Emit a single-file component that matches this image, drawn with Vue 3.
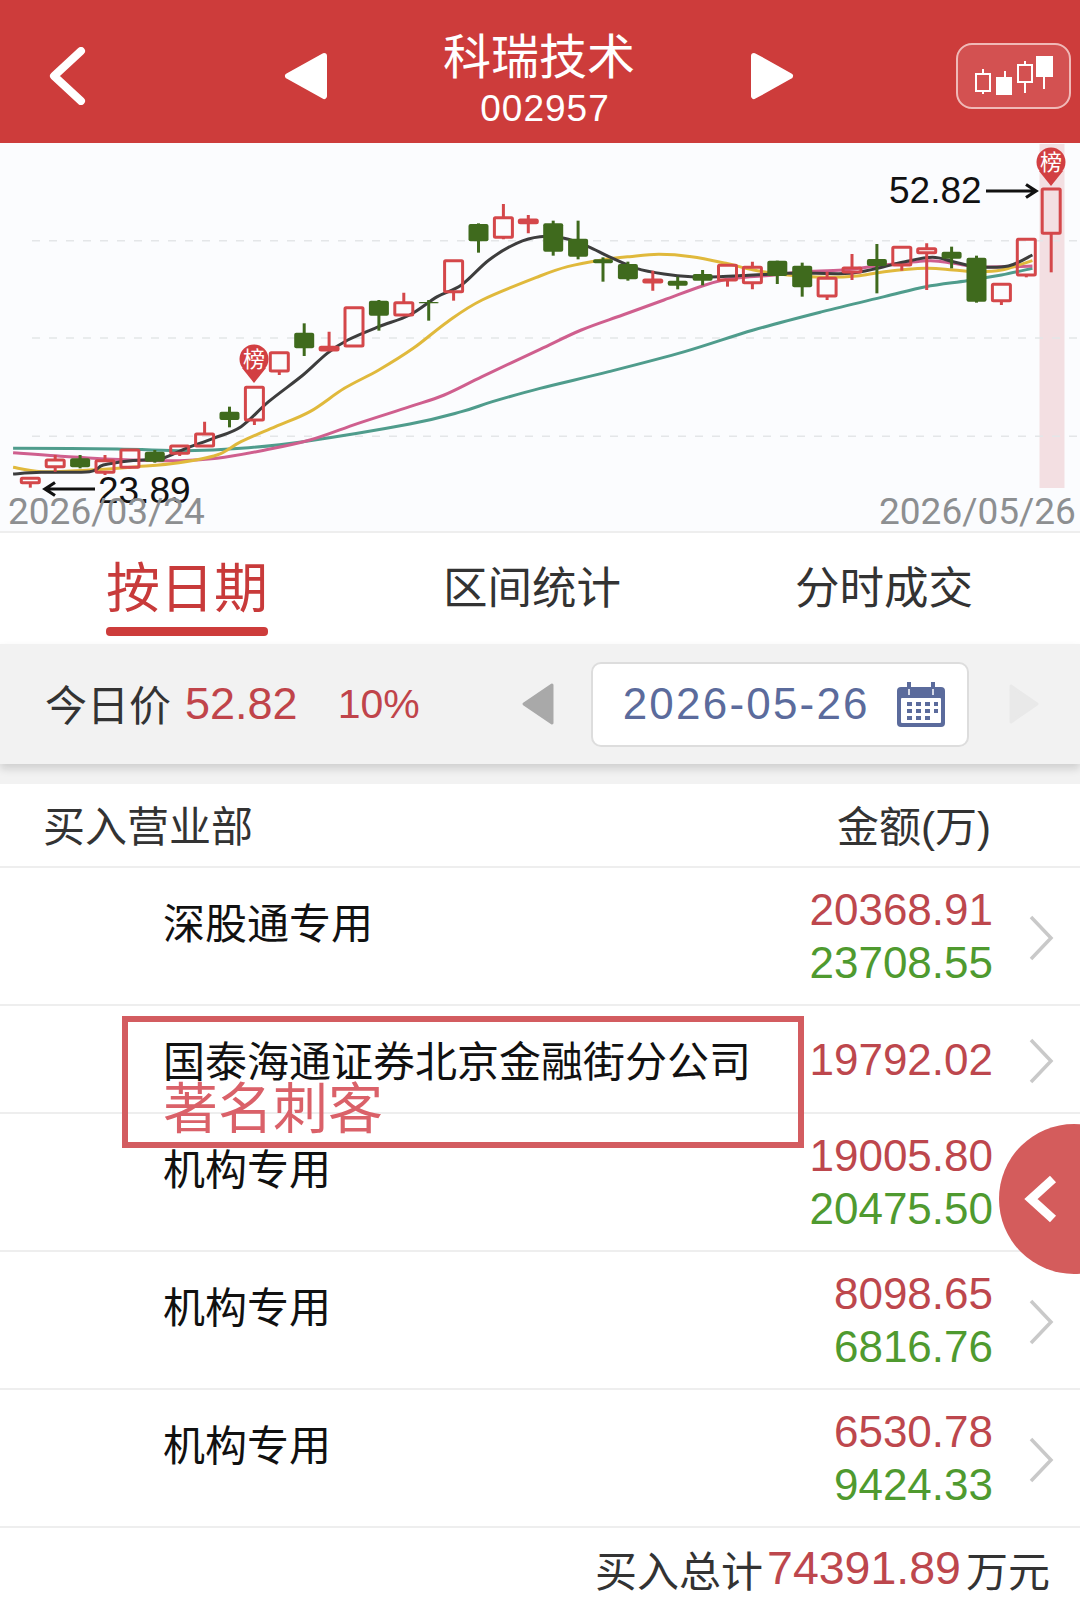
<script setup>
// chart numbers were read off the zoomed crops, z = crop pixel
const px = z => z / 2.904
const py = z => z / 3 - 3
const pr = z => z / 2.904 + 540

// [top of wick, top of body, bottom of body, bottom of wick, up?]
const raw = [
  [1015, 1015, 1028, 1043, 1], [945, 960, 980, 995, 1], [945, 955, 982, 985, 0], [945, 962, 997, 1005, 1],
  [930, 930, 982, 985, 1], [930, 935, 965, 968, 0], [918, 918, 940, 948, 1], [845, 882, 918, 920, 1],
  [800, 815, 840, 862, 0], [742, 742, 840, 855, 1], [638, 638, 693, 705, 1], [550, 578, 625, 648, 0],
  [575, 622, 630, 632, 1], [503, 503, 618, 620, 1], [480, 482, 527, 572, 0], [458, 488, 525, 528, 1],
  [480, 486, 490, 542, 0], [362, 362, 455, 482, 1], [250, 252, 304, 338, 0], [192, 233, 292, 298, 1],
  [225, 240, 248, 280, 1], [242, 250, 335, 347, 0], [242, 296, 350, 358, 0], [352, 358, 370, 425, 0],
  [365, 372, 418, 422, 0], [392, 420, 426, 452, 1], [410, 422, 437, 448, 0], [390, 402, 422, 436, 0],
  [376, 376, 420, 440, 1], [365, 382, 428, 448, 1], [362, 362, 408, 432, 0], [368, 377, 442, 470, 0],
  [395, 415, 468, 480, 1], [342, 384, 396, 420, 1], [312, 357, 378, 460, 0], [322, 322, 375, 392, 1],
  [310, 326, 338, 450, 1], [320, 335, 356, 385, 0], [347, 353, 485, 488, 0], [433, 433, 482, 495, 1],
  [298, 298, 405, 412, 1], [147, 147, 280, 397, 1]
]
const candles = raw.map((c, i) => {
  const x = 30.3 + i * 24.9
  return { x, wt: py(c[0]), t: py(c[1]), b: py(c[2]), wb: py(c[3]), up: c[4] === 1 }
})

function smooth(left, right) {
  const p = [...left.map(a => [px(a[0]), py(a[1])]), ...right.map(a => [pr(a[0]), py(a[1])])]
  let d = `M${p[0][0]} ${p[0][1]}`
  for (let i = 0; i < p.length - 1; i++) {
    const a = p[Math.max(i - 1, 0)], b = p[i], c = p[i + 1], e = p[Math.min(i + 2, p.length - 1)]
    d += `C${b[0] + (c[0] - a[0]) / 6} ${b[1] + (c[1] - a[1]) / 6} ${c[0] - (e[0] - b[0]) / 6} ${c[1] - (e[1] - b[1]) / 6} ${c[0]} ${c[1]}`
  }
  return d
}

const lines = [
  { color: '#4f9c8c', d: smooth(
    [[38, 925], [340, 927], [540, 932], [700, 925], [880, 905], [1190, 852], [1340, 815], [1430, 785]],
    [[0, 745], [200, 695], [420, 635], [620, 570], [820, 515], [1000, 470], [1120, 440], [1240, 422], [1340, 405], [1430, 385]]) },
  { color: '#cf5f8e', d: smooth(
    [[38, 938], [200, 950], [380, 960], [520, 962], [630, 955], [760, 932], [900, 900], [1040, 850], [1190, 800], [1290, 765], [1400, 710]],
    [[0, 628], [120, 570], [240, 525], [360, 480], [480, 435], [560, 415], [680, 405], [760, 395], [880, 390], [1000, 375], [1130, 362], [1200, 370], [1270, 380], [1360, 380], [1430, 378]]) },
  { color: '#e0b93c', d: smooth(
    [[38, 982], [120, 995], [260, 990], [400, 980], [520, 968], [630, 945], [700, 905], [800, 860], [900, 815], [1000, 745], [1100, 690], [1200, 625], [1300, 545], [1400, 480]],
    [[0, 408], [80, 380], [180, 360], [260, 350], [345, 343], [440, 350], [540, 370], [620, 390], [720, 405], [830, 412], [920, 408], [1000, 395], [1120, 385], [1200, 390], [1270, 395], [1340, 390], [1430, 362]]) },
  { color: '#3d3d3d', d: smooth(
    [[38, 1002], [120, 997], [260, 995], [300, 975], [380, 962], [470, 955], [540, 925], [620, 895], [700, 860], [780, 785], [880, 705], [950, 640], [1010, 600], [1100, 560], [1190, 525], [1270, 470], [1340, 435], [1420, 360], [1500, 310]],
    [[0, 290], [70, 295], [140, 320], [200, 350], [280, 385], [360, 402], [440, 410], [520, 410], [620, 405], [720, 400], [800, 400], [900, 400], [980, 385], [1060, 365], [1140, 352], [1200, 365], [1270, 380], [1360, 378], [1430, 345]]) }
]

const gridLines = [py(302), py(594), py(889)]
const pins = [{ x: 254, y: 216 }, { x: 1051, y: 19 }]
const tabs = ['按日期', '区间统计', '分时成交']
const rows = [
  { name: '深股通专用', buy: '20368.91', sell: '23708.55' },
  { name: '国泰海通证券北京金融街分公司', buy: '19792.02', tagged: true },
  { name: '机构专用', buy: '19005.80', sell: '20475.50' },
  { name: '机构专用', buy: '8098.65', sell: '6816.76' },
  { name: '机构专用', buy: '6530.78', sell: '9424.33' }
]
</script>

<template>
  <div class="page">
    <header class="top">
      <svg class="back" width="38" height="58" viewBox="0 0 38 58">
        <path d="M33 4 L6 29 L33 54" fill="none" stroke="#fff" stroke-width="8" stroke-linecap="round" stroke-linejoin="round" />
      </svg>
      <svg class="prev" width="43" height="48" viewBox="0 0 43 48">
        <path d="M40 4 L4 24 L40 44 Z" fill="#fff" stroke="#fff" stroke-width="6" stroke-linejoin="round" />
      </svg>
      <div class="title">
        <div class="name">科瑞技术</div>
        <div class="code">002957</div>
      </div>
      <svg class="next" width="43" height="48" viewBox="0 0 43 48">
        <path d="M3 4 L39 24 L3 44 Z" fill="#fff" stroke="#fff" stroke-width="6" stroke-linejoin="round" />
      </svg>
      <div class="kbtn">
        <svg width="115" height="66" viewBox="0 0 115 66">
          <g fill="none" stroke="#fff" stroke-width="2">
            <rect x="20" y="31" width="14" height="17" />
            <path d="M27 26v5M27 48v3" />
            <rect x="62" y="22" width="14" height="17" />
            <path d="M69 18v4M69 39v11" />
            <path d="M49 28v6M88 33v13" />
          </g>
          <rect x="40" y="34" width="16" height="18" fill="#fff" />
          <rect x="80" y="13" width="17" height="21" fill="#fff" />
        </svg>
      </div>
    </header>

    <section class="chart">
      <svg width="1080" height="390" viewBox="0 0 1080 390">
        <rect x="1039.5" y="1" width="25" height="344" fill="#f3dfe2" />
        <line v-for="y in gridLines" :key="y" x1="32" x2="1080" :y1="y" :y2="y" stroke="#e4e6e8" stroke-width="1.5" stroke-dasharray="8 9" />
        <path v-for="l in lines" :key="l.color" :d="l.d" fill="none" :stroke="l.color" stroke-width="3" />
        <g v-for="c in candles" :key="c.x">
          <template v-if="c.up">
            <path :d="`M${c.x} ${c.wt}V${c.t}M${c.x} ${c.b}V${c.wb}`" stroke="#d4474a" stroke-width="3" />
            <rect :x="c.x - 9" :y="c.t" width="18" :height="c.b - c.t" fill="none" stroke="#d4474a" stroke-width="3" rx="1" />
          </template>
          <template v-else>
            <path :d="`M${c.x} ${c.wt}V${c.wb}`" stroke="#3f6a1d" stroke-width="3" />
            <rect :x="c.x - 10" :y="c.t" width="20" :height="c.b - c.t" fill="#3f6a1d" rx="2" />
          </template>
        </g>
        <g v-for="p in pins" :key="p.x">
          <path :d="`M${p.x - 12} ${p.y + 9} L${p.x} ${p.y + 24} L${p.x + 12} ${p.y + 9} Z`" fill="#d23f42" />
          <circle :cx="p.x" :cy="p.y" r="14.5" fill="#d23f42" />
          <text class="pin-text" :x="p.x" :y="p.y + 8">榜</text>
        </g>
        <text class="price" x="889" y="60">52.82</text>
        <path d="M986 48H1034M1026 41.5L1036 48L1026 54.5" fill="none" stroke="#111" stroke-width="3.2" />
        <text class="price" x="98" y="360">23.89</text>
        <path d="M95 346H47M55 339.5L45 346L55 352.5" fill="none" stroke="#111" stroke-width="3.2" />
        <text class="date" x="8" y="381">2026/03/24</text>
        <text class="date" x="879" y="381">2026/05/26</text>
      </svg>
    </section>

    <nav class="tabs">
      <div v-for="(t, i) in tabs" :key="t" class="tab" :class="{ on: i === 0 }">{{ t }}</div>
    </nav>

    <div class="bar">
      <span class="today">今日价</span>
      <span class="price-now">52.82</span>
      <span class="pct">10%</span>
      <svg class="day-prev" width="34" height="44" viewBox="0 0 34 44">
        <path d="M31 3 L3 22 L31 41 Z" fill="#a9a9a9" stroke="#a9a9a9" stroke-width="3" stroke-linejoin="round" />
      </svg>
      <div class="datebox">
        <span class="datetext">2026-05-26</span>
        <svg width="48" height="46" viewBox="0 0 48 46">
          <rect x="0" y="6" width="48" height="40" rx="4" fill="#5b6b9c" />
          <rect x="4" y="17" width="40" height="25" rx="1" fill="#fff" />
          <path d="M12 1v12M36 1v12" stroke="#5b6b9c" stroke-width="4" />
          <path d="M12 8v6M36 8v6" stroke="#fff" stroke-width="1.5" />
          <g fill="#5b6b9c">
            <rect x="10" y="21" width="5" height="4" /><rect x="19" y="21" width="5" height="4" />
            <rect x="28" y="21" width="5" height="4" /><rect x="37" y="21" width="4" height="4" />
            <rect x="10" y="28" width="5" height="4" /><rect x="19" y="28" width="5" height="4" />
            <rect x="28" y="28" width="5" height="4" /><rect x="37" y="28" width="4" height="4" />
            <rect x="10" y="35" width="5" height="4" /><rect x="19" y="35" width="5" height="4" />
            <rect x="28" y="35" width="5" height="4" />
          </g>
        </svg>
      </div>
      <svg class="day-next" width="32" height="42" viewBox="0 0 32 42">
        <path d="M3 3 L29 21 L3 39 Z" fill="#e9e9e9" stroke="#e9e9e9" stroke-width="3" stroke-linejoin="round" />
      </svg>
    </div>

    <div class="gap"></div>

    <div class="thead">
      <span>买入营业部</span>
      <span class="amount">金额(万)</span>
    </div>

    <div v-for="(r, i) in rows" :key="i" class="row" :class="{ single: !r.sell }">
      <div class="dept">{{ r.name }}</div>
      <div class="nums">
        <div class="buy">{{ r.buy }}</div>
        <div v-if="r.sell" class="sell">{{ r.sell }}</div>
      </div>
      <svg class="arrow" width="26" height="46" viewBox="0 0 26 46">
        <path d="M3 2 L23 23 L3 44" fill="none" stroke="#c9c9c9" stroke-width="3.5" />
      </svg>
    </div>

    <div class="foot">
      <span>买入总计</span>
      <span class="total">74391.89</span>
      <span>万元</span>
    </div>

    <div class="mark">
      <span class="mark-text">著名刺客</span>
    </div>
    <div class="fold">
      <svg width="34" height="48" viewBox="0 0 34 48">
        <path d="M29 4 L7 24 L29 44" fill="none" stroke="#fff" stroke-width="9" />
      </svg>
    </div>
  </div>
</template>

<style scoped>
.page {
  position: relative;
  width: 1080px;
  height: 1604px;
  overflow: hidden;
  background: #fff;
  font-family: "Liberation Sans", "Noto Sans CJK SC", sans-serif;
  color: #111;
}

.top {
  height: 143px;
  background: #cd3c3b;
  display: flex;
  align-items: center;
  color: #fff;
}
.back { margin-left: 48px; margin-top: 9px; }
.prev { margin-left: 198px; margin-top: 8px; }
.title { width: 424px; text-align: center; padding-top: 21px; }
.name { font-size: 48px; line-height: 58px; margin-top: -6px; }
.code { font-size: 37px; line-height: 40px; margin-top: 2px; letter-spacing: 1px; margin-left: 12px; }
.next { margin-top: 8px; }
.kbtn {
  margin-left: 162px;
  width: 115px;
  height: 66px;
  box-sizing: border-box;
  border: 2px solid #f0b9b7;
  border-radius: 16px;
  background: #d35151;
  margin-top: 9px;
}
.kbtn svg { margin: -2px; display: block; }

.chart {
  height: 390px;
  background: #fbfcfe;
  box-shadow: inset 0 -2px 0 #eeeeee;
}
.chart svg { display: block; }
.price { font-size: 37px; fill: #111; }
.date { font-size: 37px; fill: #8d8f91; font-family: Roboto, sans-serif; }
.pin-text { font-size: 22px; fill: #fff; text-anchor: middle; }

.tabs {
  height: 111px;
  display: flex;
  align-items: flex-start;
  box-sizing: border-box;
  padding-left: 106px;
}
.tab {
  font-size: 44.5px;
  line-height: 54px;
  margin-top: 29px;
  color: #333;
  white-space: nowrap;
}
.tab:nth-child(2) { margin-left: 175px; }
.tab:nth-child(3) { margin-left: 174px; }
.tab.on {
  position: relative;
  color: #c83a3a;
  font-size: 54px;
  width: 162px;
}
.tab.on::after {
  content: "";
  position: absolute;
  left: 0;
  top: 65px;
  width: 162px;
  height: 9px;
  border-radius: 4px;
  background: #cd3c3b;
}

.bar {
  height: 120px;
  background: #f2f2f2;
  display: flex;
  align-items: center;
  box-shadow: 0 5px 8px rgba(0, 0, 0, 0.14);
  position: relative;
}
.today { margin-left: 45px; font-size: 42px; color: #333; white-space: nowrap; position: relative; top: -2px; }
.price-now { margin-left: 14px; font-size: 45px; color: #c0444a; }
.pct { margin-left: 40px; font-size: 41px; color: #c0444a; }
.day-prev { margin-left: 101px; }
.datebox {
  margin-left: 36px;
  width: 378px;
  height: 85px;
  box-sizing: border-box;
  background: #fff;
  border: 2px solid #dddddd;
  border-radius: 10px;
  display: flex;
  align-items: center;
  padding-left: 30px;
}
.datetext { font-size: 44px; letter-spacing: 2.2px; color: #5b6b9c; width: 274px; }
.day-next { margin-left: 39px; }

.gap { height: 20px; background: #f2f2f2; }

.thead {
  height: 84px;
  box-sizing: border-box;
  border-bottom: 2px solid #eeeeee;
  display: flex;
  justify-content: space-between;
  align-items: center;
  padding: 0 89px 4px 43px;
  font-size: 42px;
  color: #333;
}

.row {
  height: 138px;
  box-sizing: border-box;
  border-bottom: 2px solid #eeeeee;
  display: flex;
  align-items: flex-start;
  padding-left: 163px;
  position: relative;
}
.row.single { height: 108px; }
.dept {
  flex: 1;
  font-size: 42px;
  line-height: 54px;
  margin-top: 30px;
  white-space: nowrap;
}
.nums {
  width: 300px;
  margin-right: 87px;
  margin-top: 15px;
  text-align: right;
  font-size: 44px;
  line-height: 53px;
}
.row.single .nums { margin-top: 27px; }
.buy { color: #bd474d; }
.sell { color: #4f9a2f; }
.arrow { position: absolute; right: 26px; top: 47px; }
.row.single .arrow { top: 32px; }

.foot {
  height: 76px;
  display: flex;
  justify-content: flex-end;
  align-items: center;
  padding: 4px 30px 0 0;
  box-sizing: border-box;
  font-size: 42px;
  color: #333;
}
.total { color: #bd474d; font-size: 46.5px; margin: 0 5px 0 4px; }

.mark {
  position: absolute;
  left: 122px;
  top: 1016px;
  width: 682px;
  height: 132px;
  box-sizing: border-box;
  border: 6px solid #d35c60;
}
.mark-text {
  position: absolute;
  left: 35px;
  top: 53px;
  font-size: 55px;
  line-height: 68px;
  color: #da6169;
  white-space: nowrap;
}
.fold {
  position: absolute;
  left: 999px;
  top: 1124px;
  width: 150px;
  height: 150px;
  border-radius: 50%;
  background: #d45c5c;
}
.fold svg { position: absolute; left: 25px; top: 51px; }
</style>

<style>
html, body { margin: 0; background: #fff; }
</style>
